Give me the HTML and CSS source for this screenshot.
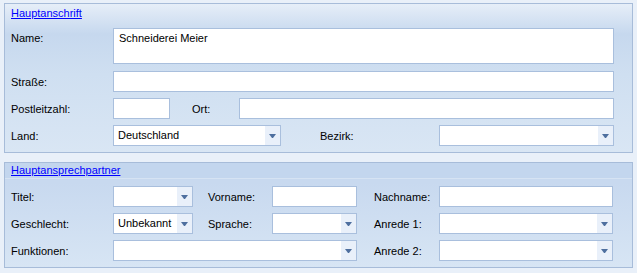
FILE: index.html
```html
<!DOCTYPE html>
<html lang="de">
  <head>
    <meta charset="UTF-8" />
    <title>Adresse</title>
    <link rel="stylesheet" href="styles.css">
  </head>
  <body>
    <div class="panel panel-address">
      <div class="panel-head"><a href="#">Hauptanschrift</a></div>
      <div class="panel-body">
        <div class="row row-name">
          <label>Name:</label>
          <div class="field area">Schneiderei Meier</div>
        </div>
        <div class="row">
          <label>Straße:</label>
          <div class="field grow"></div>
        </div>
        <div class="row">
          <label>Postleitzahl:</label>
          <div class="field zip"></div>
          <label class="mid ort">Ort:</label>
          <div class="field grow"></div>
        </div>
        <div class="row">
          <label>Land:</label>
          <div class="field combo land"><span>Deutschland</span><i class="drop"></i></div>
          <label class="mid bezirk">Bezirk:</label>
          <div class="field combo grow"><span></span><i class="drop"></i></div>
        </div>
      </div>
    </div>

    <div class="panel panel-contact">
      <div class="panel-head band"><a href="#">Hauptansprechpartner</a></div>
      <div class="panel-body grid">
        <label>Titel:</label>
        <div class="field combo"><span></span><i class="drop"></i></div>
        <label class="col3">Vorname:</label>
        <div class="field"></div>
        <label class="col5">Nachname:</label>
        <div class="field"></div>

        <label>Geschlecht:</label>
        <div class="field combo"><span>Unbekannt</span><i class="drop"></i></div>
        <label class="col3">Sprache:</label>
        <div class="field combo"><span></span><i class="drop"></i></div>
        <label class="col5">Anrede 1:</label>
        <div class="field combo"><span></span><i class="drop"></i></div>

        <label>Funktionen:</label>
        <div class="field combo span3"><span></span><i class="drop"></i></div>
        <label class="col5">Anrede 2:</label>
        <div class="field combo"><span></span><i class="drop"></i></div>
      </div>
    </div>
  </body>
</html>
```

FILE: styles.css
```css
body {
  margin: 0;
  padding: 3px 5px 0 4px;
  background: #e9f0f9;
  font-family: "Liberation Sans", Arial, sans-serif;
  font-size: 11px;
  color: #000;
}

.panel {
  border: 1px solid #a7bcd9;
  width: 627px;
}

.panel-address {
  background: linear-gradient(#e6eef8 0px, #c6d8ee 30px, #cfdff1 70px, #d9e6f4 148px);
}

.panel-contact {
  margin-top: 9px;
  background: linear-gradient(#c8d9ef 0px, #c8d9ef 20px, #d7e5f4 104px);
}

.panel-head {
  height: 19px;
  padding-left: 6px;
  line-height: 18px;
}

.panel-head.band {
  height: 15px;
  line-height: 15px;
  background: #c3d6ee;
  border-bottom: 1px solid #d6e3f3;
}

.panel-head a {
  color: #0000ff;
  text-decoration: underline;
}

.panel-body {
  padding: 5px 18px 6px 6px;
}

.panel-contact .panel-body {
  padding-top: 7px;
}

.row {
  display: flex;
  align-items: center;
  height: 21px;
  margin-bottom: 6px;
}

.row:last-child {
  margin-bottom: 0;
}

.row-name {
  height: 36px;
  align-items: flex-start;
  margin-bottom: 7px;
}

.row-name label {
  padding-top: 4px;
}

.row label {
  width: 102px;
  flex: none;
}

.row label.ort {
  width: 47px;
  margin-left: 22px;
}

.row label.bezirk {
  width: 119px;
  margin-left: 39px;
}

.field {
  box-sizing: border-box;
  height: 21px;
  background: #fff;
  border: 1px solid #a9bfdd;
  padding: 0 5px;
  line-height: 19px;
  white-space: nowrap;
}

.field.grow {
  flex: 1;
}

.field.area {
  flex: 1;
  height: 36px;
  line-height: 15px;
  padding-top: 2px;
}

.field.zip {
  width: 57px;
}

.field.land {
  width: 168px;
}

.combo {
  display: flex;
  padding: 0 0 0 4px;
}

.combo span {
  flex: 1;
}

.drop {
  width: 15px;
  flex: none;
  background: #e9f0fa;
  display: flex;
  align-items: center;
  justify-content: center;
}

.drop::before {
  content: "";
  width: 1px;
  height: 0;
  border-left: 3px solid transparent;
  border-right: 3px solid transparent;
  border-top: 4px solid #4e6f9f;
  margin-top: 1px;
}

.grid {
  display: grid;
  grid-template-columns: 102px 80px 79px 85px 82px 174px;
  grid-auto-rows: 21px;
  row-gap: 6px;
  align-items: center;
}

.grid .field {
  align-self: stretch;
}

.grid label.col3 {
  padding-left: 15px;
}

.grid label.col5 {
  padding-left: 17px;
}

.grid .span3 {
  grid-column: span 3;
}
```
